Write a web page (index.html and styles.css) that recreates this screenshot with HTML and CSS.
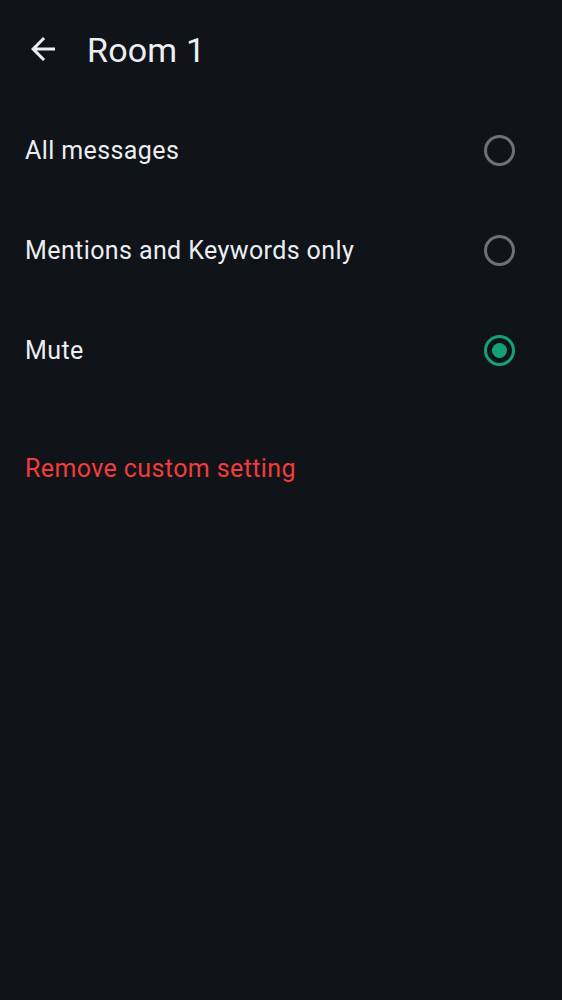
FILE: index.html
```html
<!DOCTYPE html>
<html>
<head>
<meta charset="utf-8">
<link rel="stylesheet" href="styles.css">
</head>
<body>
<div class="screen">
  <header class="topbar">
    <svg class="back" viewBox="0 0 24 24" width="36" height="36"><path d="M20 11H7.83l5.59-5.59L12 4l-8 8 8 8 1.41-1.41L7.83 13H20v-2z" fill="#ebeef2"/></svg>
    <h1 class="title">Room 1</h1>
  </header>
  <div class="options">
    <div class="row"><span class="label">All messages</span><span class="radio"></span></div>
    <div class="row"><span class="label">Mentions and Keywords only</span><span class="radio"></span></div>
    <div class="row"><span class="label">Mute</span><span class="radio checked"></span></div>
  </div>
  <div class="remove">Remove custom setting</div>
</div>
</body>
</html>
```
FILE: styles.css
```css
html, body {
  margin: 0;
  padding: 0;
  background: #101317;
}
.screen {
  width: 562px;
  min-height: 1000px;
  background: #101317;
  font-family: Roboto, "Noto Sans", sans-serif;
  color: #ebeef2;
}
.topbar {
  height: 100px;
  display: flex;
  align-items: center;
  padding-left: 25px;
  box-sizing: border-box;
}
.back {
  display: block;
  margin-top: -2px;
}
.title {
  margin: -1px 0 0 26px;
  font-size: 34px;
  font-weight: 400;
  line-height: 1;
  letter-spacing: 0.2px;
}
.options {
  display: flex;
  flex-direction: column;
}
.row {
  height: 100px;
  display: flex;
  align-items: center;
  justify-content: space-between;
  padding: 0 47px 0 25px;
  box-sizing: border-box;
}
.label {
  font-size: 25px;
  letter-spacing: 0.4px;
}
.radio {
  width: 31px;
  height: 31px;
  box-sizing: border-box;
  border: 3px solid #6d7177;
  border-radius: 50%;
  display: flex;
  align-items: center;
  justify-content: center;
}
.radio.checked {
  border-color: #14a07c;
}
.radio.checked::after {
  content: "";
  width: 15px;
  height: 15px;
  border-radius: 50%;
  background: #14a07c;
}
.remove {
  margin-top: 51px;
  padding-left: 25px;
  font-size: 25px;
  letter-spacing: 0.4px;
  color: #f23c3c;
  line-height: 36px;
}
```
